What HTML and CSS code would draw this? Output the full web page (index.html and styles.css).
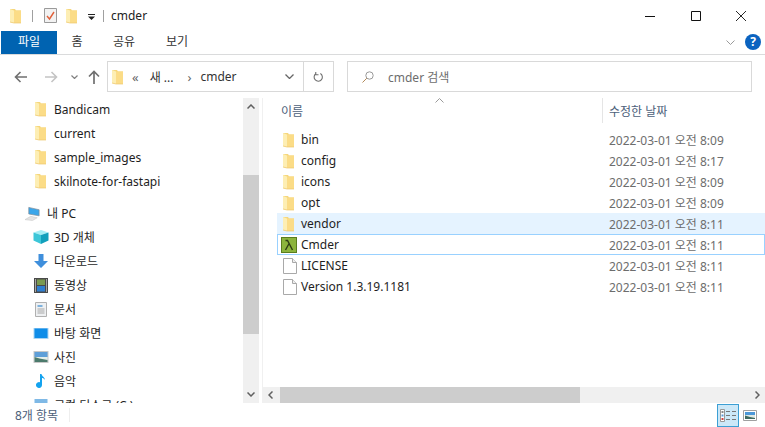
FILE: index.html
```html
<!DOCTYPE html>
<html lang="ko">
<head>
    <meta charset="UTF-8">
    <title>cmder</title>
    <link rel="stylesheet" href="styles.css">
</head>
<body>

<svg class="defs" width="0" height="0">
    <symbol id="folder" viewBox="0 0 11 16">
        <path d="M0 1h5l1 1.500h5V15H4l-4-1z" fill="#f5d67c"/>
        <path d="M0 1l4 1.500V15l-4-1z" fill="#fdeeb4"/>
        <path d="M4 2.500h7V15H4z" fill="#fbdc87"/>
        <path d="M0 14l4 1h7" fill="none" stroke="#eec76e" stroke-width=".7"/>
    </symbol>
    <symbol id="file" viewBox="0 0 14 16">
        <path d="M.5.5h9l4 4v11H.5z" fill="#fff" stroke="#a9a9a9"/>
        <path d="M9.500.5v4h4" fill="#eee" stroke="#a9a9a9"/>
    </symbol>
</svg>

<header class="titlebar">
    <svg class="folder-ico"><use href="#folder"/></svg>
    <span class="qa-sep"></span>
    <svg class="qa-check" viewBox="0 0 13 15" width="13" height="15">
        <path d="M.5.5h12v14H.5z" fill="#f2f2f2" stroke="#9a9a9a"/>
        <path d="M3 8l2.500 3L10 4" fill="none" stroke="#e0603a" stroke-width="1.400"/>
    </svg>
    <svg class="folder-ico qa-second"><use href="#folder"/></svg>
    <svg class="qa-drop" viewBox="0 0 7 6" width="7" height="6">
        <path d="M0 0h7v1H0zM0 2.500h7L3.500 6z" fill="#222"/>
    </svg>
    <span class="qa-sep qa-sep-2"></span>
    <span class="title">cmder</span>
    <div class="win-btns">
        <svg viewBox="0 0 10 10" width="10" height="10"><path d="M0 5.500h10" stroke="#111"/></svg>
        <svg viewBox="0 0 10 10" width="10" height="10"><path d="M.5.500h9v9h-9z" fill="none" stroke="#111"/></svg>
        <svg viewBox="0 0 10 10" width="10" height="10"><path d="M0 0l10 10M10 0L0 10" stroke="#111" stroke-width=".9"/></svg>
    </div>
</header>

<nav class="ribbon">
    <span class="tab tab-file">파일</span>
    <span class="tab tab-home">홈</span>
    <span class="tab tab-share">공유</span>
    <span class="tab">보기</span>
    <svg class="ribbon-chev" viewBox="0 0 9 5" width="9" height="5"><path d="M.5.500l4 4 4-4" fill="none" stroke="#9a9a9a"/></svg>
    <span class="help">?</span>
</nav>

<section class="navbar">
    <svg class="nav-ico" viewBox="0 0 14 12" width="14" height="12"><path d="M13 6H2M6.500 1L1.500 6l5 5" fill="none" stroke="#707070" stroke-width="1.600"/></svg>
    <svg class="nav-ico nav-fwd" viewBox="0 0 14 12" width="14" height="12"><path d="M1 6h11M7.500 1l5 5-5 5" fill="none" stroke="#c4c4c4" stroke-width="1.600"/></svg>
    <svg class="nav-ico nav-recent" viewBox="0 0 7 4" width="7" height="4"><path d="M.5.500L3.500 3.500 6.500.5" fill="none" stroke="#808080" stroke-width="1.200"/></svg>
    <svg class="nav-ico nav-up" viewBox="0 0 12 14" width="12" height="14"><path d="M6 14V2M1 6.500L6 1.500l5 5" fill="none" stroke="#707070" stroke-width="1.700"/></svg>
    <div class="address">
        <svg class="folder-ico"><use href="#folder"/></svg>
        <span class="crumb-mark">«</span>
        <span class="crumb">새 ...</span>
        <span class="crumb-mark crumb-arrow">›</span>
        <span class="crumb">cmder</span>
        <svg class="addr-chev" viewBox="0 0 9 5" width="9" height="5"><path d="M.5.500l4 4 4-4" fill="none" stroke="#666" stroke-width="1.300"/></svg>
        <span class="addr-refresh">
            <svg viewBox="0 0 12 12" width="11" height="12"><path d="M3 2.500a4.500 4.500 0 1 0 5-.3M3 .5v3h3" fill="none" stroke="#707070" stroke-width="1.200"/></svg>
        </span>
    </div>
    <div class="search">
        <svg viewBox="0 0 12 12" width="12" height="12"><circle cx="7.500" cy="4.500" r="3.700" fill="none" stroke="#999"/><path d="M4.800 7.200L.5 11.500" stroke="#b38a5a"/></svg>
        <span>cmder 검색</span>
    </div>
</section>

<main class="panes">
    <aside class="sidebar">
        <ul class="tree">
            <li><svg class="folder-ico"><use href="#folder"/></svg>Bandicam</li>
            <li><svg class="folder-ico"><use href="#folder"/></svg>current</li>
            <li><svg class="folder-ico"><use href="#folder"/></svg>sample_images</li>
            <li><svg class="folder-ico"><use href="#folder"/></svg>skilnote-for-fastapi</li>
            <li class="tree-root">
                <svg class="tree-ico pc-ico" viewBox="0 0 17 15" width="17" height="15"><path d="M4 1l11 2.500v6.500L4 8z" fill="#3aa6ea" stroke="#7f8a94" stroke-width=".7"/><path d="M0 14l6-3.500 7 1.500-5 3z" fill="#e4e4e4" stroke="#c0c0c0" stroke-width=".5"/></svg>내 PC
            </li>
            <li>
                <svg class="tree-ico" viewBox="0 0 15 14" width="15" height="14"><path d="M0 2.500L7.500 0 15 2.500 7.500 5z" fill="#a6eef5"/><path d="M0 2.500L7.500 5v9L0 10.500z" fill="#3cc6d8"/><path d="M7.500 5L15 2.500v8L7.500 14z" fill="#12a0bc"/></svg>3D 개체
            </li>
            <li>
                <svg class="tree-ico" viewBox="0 0 14 14" width="14" height="14"><path d="M4.500 0h5v7H14l-7 7-7-7h4.500z" fill="#3f8fdc"/></svg>다운로드
            </li>
            <li>
                <svg class="tree-ico" viewBox="0 0 14 15" width="14" height="15"><path d="M0 0h14v15H0z" fill="#4a4a4a"/><path d="M3 1.500h8v5.500H3z" fill="#7a9a50"/><path d="M3 8h8v5.500H3z" fill="#2f7fd0"/><path d="M1 1h1v13H1zM12 1h1v13h-1z" fill="#cfcfcf" opacity=".7"/></svg>동영상
            </li>
            <li>
                <svg class="tree-ico" viewBox="0 0 12 15" width="12" height="15"><path d="M.5.500h11v14H.5z" fill="#eef0f2" stroke="#b0b0b0"/><path d="M2.500 3h5v2h-5z" fill="#7fb2dd"/><path d="M2.500 7h7M2.500 9h7M2.500 11h7" stroke="#a8a8a8"/></svg>문서
            </li>
            <li>
                <svg class="tree-ico" viewBox="0 0 15 11" width="15" height="11"><path d="M0 0h15v11H0z" fill="#a9d4f2"/><path d="M1 .5h13v9.500H1z" fill="#0f8de8"/></svg>바탕 화면
            </li>
            <li>
                <svg class="tree-ico" viewBox="0 0 15 12" width="15" height="12"><path d="M0 0h15v12H0z" fill="#c8c8c8"/><path d="M1 1h13v5H1z" fill="#5f9fd8"/><path d="M1 6h13v5H1z" fill="#e6efe9"/><path d="M1 6l5 1.500 8 1.500v2H1z" fill="#4c7a6c"/></svg>사진
            </li>
            <li>
                <svg class="tree-ico" viewBox="0 0 10 14" width="10" height="14"><path d="M4 0h1.500c.3 2.500 3.500 3 3.500 6-1-1.500-2-2-3-2v7a3 3 0 1 1-2-2.800z" fill="#14a3ef"/></svg>음악
            </li>
            <li>
                <svg class="tree-ico" viewBox="0 0 15 12" width="15" height="12"><path d="M1 0h13v12H1z" fill="#7fb9e6"/></svg>로컬 디스크 (C:)
            </li>
        </ul>
        <div class="vscroll">
            <svg class="scroll-arrow" viewBox="0 0 8 5" width="8" height="5"><path d="M.5 4.500l3.500-3.500 3.500 3.500" fill="none" stroke="#606060" stroke-width="1.500"/></svg>
            <div class="vtrack"><div class="vthumb"></div></div>
            <svg class="scroll-arrow" viewBox="0 0 8 5" width="8" height="5"><path d="M.5.500L4 4 7.500.5" fill="none" stroke="#606060" stroke-width="1.500"/></svg>
        </div>
    </aside>

    <section class="content">
        <div class="columns">
            <span class="col col-name">이름
                <svg class="sort-mark" viewBox="0 0 9 5" width="9" height="5"><path d="M.5 4.500l4-4 4 4" fill="none" stroke="#9a9a9a"/></svg>
            </span>
            <span class="col col-date">수정한 날짜</span>
        </div>
        <ul class="files">
            <li class="file"><svg class="folder-ico"><use href="#folder"/></svg><span class="fname">bin</span><span class="fdate">2022-03-01 오전 8:09</span></li>
            <li class="file"><svg class="folder-ico"><use href="#folder"/></svg><span class="fname">config</span><span class="fdate">2022-03-01 오전 8:17</span></li>
            <li class="file"><svg class="folder-ico"><use href="#folder"/></svg><span class="fname">icons</span><span class="fdate">2022-03-01 오전 8:09</span></li>
            <li class="file"><svg class="folder-ico"><use href="#folder"/></svg><span class="fname">opt</span><span class="fdate">2022-03-01 오전 8:09</span></li>
            <li class="file file-hover"><svg class="folder-ico"><use href="#folder"/></svg><span class="fname">vendor</span><span class="fdate">2022-03-01 오전 8:11</span></li>
            <li class="file file-focus">
                <svg class="file-ico lambda-ico" viewBox="0 0 16 16" width="16" height="16"><path d="M0 0h16v16H0z" fill="#5a7d1e"/><path d="M1 1h14v14H1z" fill="#8cb43c"/><path d="M4.500 3.500h2l5 9.500M7.800 7L4.500 13" fill="none" stroke="#2f3d14" stroke-width="1.400"/></svg>
                <span class="fname">Cmder</span><span class="fdate">2022-03-01 오전 8:11</span>
            </li>
            <li class="file"><svg class="file-ico"><use href="#file"/></svg><span class="fname">LICENSE</span><span class="fdate">2022-03-01 오전 8:11</span></li>
            <li class="file"><svg class="file-ico"><use href="#file"/></svg><span class="fname">Version 1.3.19.1181</span><span class="fdate">2022-03-01 오전 8:11</span></li>
        </ul>
        <div class="hscroll">
            <svg viewBox="0 0 5 8" width="5" height="8"><path d="M4.500.5L1 4l3.500 3.500" fill="none" stroke="#606060" stroke-width="1.500"/></svg>
            <div class="hthumb"></div>
            <svg class="hs-right" viewBox="0 0 5 8" width="5" height="8"><path d="M.5.500L4 4 .5 7.500" fill="none" stroke="#606060" stroke-width="1.500"/></svg>
        </div>
    </section>
</main>

<footer class="statusbar">
    <span class="count">8개 항목</span>
    <span class="status-sep"></span>
    <div class="views">
        <span class="view view-on">
            <svg viewBox="0 0 17 13" width="17" height="13">
                <path d="M.5.500h4v12h-4z" fill="#fff" stroke="#999"/>
                <path d="M1.500 2h2v2h-2z" fill="#888"/><path d="M1.500 5.500h2v2h-2z" fill="#5a9ad8"/><path d="M1.500 9h2v2h-2z" fill="#d04040"/>
                <path d="M6 2.500h4M12 2.500h4M6 6.500h4M12 6.500h4M6 10.500h4M12 10.500h4" stroke="#777"/>
            </svg>
        </span>
        <span class="view">
            <svg viewBox="0 0 14 11" width="14" height="11"><path d="M.5.500h13v10H.5z" fill="#fff" stroke="#a0a0a0"/><path d="M2 2h10v3H2z" fill="#4c98d8"/><path d="M2 5h10v4H2z" fill="#dfe9e4"/><path d="M2 5.500l5 1.500 5 1v1H2z" fill="#3f6a60"/></svg>
        </span>
    </div>
</footer>

</body>
</html>
```

FILE: styles.css
```css
* {
    box-sizing: border-box;
}
html, body {
    height: 100%;
}
body {
    margin: 0;
    height: 427px;
    overflow: hidden;
    display: flex;
    flex-direction: column;
    background: #fff;
    color: #1e1e1e;
    font-family: "Noto Sans", "Noto Sans CJK KR", sans-serif;
    font-size: 12px;
}
ul {
    list-style: none;
    margin: 0;
    padding: 0;
}
.defs {
    position: absolute;
}
.folder-ico {
    width: 11px;
    height: 16px;
    flex: none;
}
.file-ico {
    width: 14px;
    height: 16px;
    flex: none;
}

/* title bar */
.titlebar {
    height: 31px;
    display: flex;
    align-items: center;
    padding-left: 10px;
    flex: none;
}
.qa-sep {
    width: 1px;
    height: 12px;
    background: #a0a0a0;
    margin: 0 11px 0 11px;
}
.qa-second {
    margin-left: 9px;
}
.qa-drop {
    margin-left: 11px;
    margin-top: 3px;
}
.qa-sep-2 {
    margin: 0 7px 0 8px;
}
.title {
    color: #222;
}
.win-btns {
    margin-left: auto;
    width: 120px;
    display: flex;
    justify-content: space-between;
    padding-right: 19px;
    align-items: center;
}

/* ribbon tabs */
.ribbon {
    height: 24px;
    display: flex;
    align-items: stretch;
    padding-left: 1px;
    border-bottom: 1px solid #dadbdc;
    flex: none;
}
.tab {
    width: 52px;
    text-align: center;
    line-height: 21px;
    color: #333;
}
.tab-file {
    width: 56px;
    height: 23px;
    background: #0063b1;
    color: #fff;
}
.tab-home {
    width: 40px;
}
.tab-share {
    width: 54px;
}
.ribbon-chev {
    margin: 9px 0 0 auto;
}
.help {
    width: 16px;
    height: 16px;
    margin: 3px 4px 0 10px;
    border-radius: 50%;
    background: #0b63c0;
    color: #fff;
    font-weight: bold;
    line-height: 16px;
    text-align: center;
}

/* nav and search */
.navbar {
    height: 43px;
    display: flex;
    align-items: center;
    padding: 0 13px 0 14px;
    flex: none;
}
.nav-fwd {
    margin-left: 16px;
}
.nav-recent {
    margin-left: 13px;
}
.nav-up {
    margin-left: 10px;
}
.address {
    width: 227px;
    height: 31px;
    margin-left: 7px;
    border: 1px solid #d9d9d9;
    display: flex;
    align-items: center;
    padding-left: 4px;
    color: #333;
}
.crumb-mark {
    margin: 0 11px 0 9px;
    color: #666;
    font-size: 13px;
}
.crumb-arrow {
    margin: 0 9px 0 14px;
}
.addr-chev {
    margin-left: auto;
}
.addr-refresh {
    width: 30px;
    height: 29px;
    margin-left: 9px;
    border-left: 1px solid #d9d9d9;
    display: flex;
    align-items: center;
    justify-content: center;
}
.search {
    flex: 1;
    height: 31px;
    margin-left: 13px;
    border: 1px solid #d9d9d9;
    display: flex;
    align-items: center;
    padding-left: 14px;
    gap: 14px;
    color: #6d6d6d;
}

/* sidebar */
.panes {
    flex: 1;
    min-height: 0;
    display: flex;
}
.sidebar {
    width: 263px;
    flex: none;
    display: flex;
    padding-right: 3px;
    border-right: 1px solid #f0f0f0;
    overflow: hidden;
}
.tree {
    width: 243px;
    margin-top: -1px;
    overflow: hidden;
    flex: none;
}
.tree li {
    height: 24px;
    display: flex;
    align-items: center;
    padding-left: 35px;
    gap: 8px;
    white-space: nowrap;
}
.tree li.tree-root {
    margin-top: 8px;
    padding-left: 25px;
    gap: 6px;
}
.tree .tree-ico {
    width: 16px;
    margin-left: -2px;
    margin-right: -3px;
    flex: none;
}
.tree li.tree-root .tree-ico {
    margin: 0;
}
.vscroll {
    width: 16px;
    background: #f0f0f0;
    display: flex;
    flex-direction: column;
    align-items: center;
}
.scroll-arrow {
    flex: none;
    margin: 6px 0;
}
.vtrack {
    flex: 1;
    width: 100%;
    padding-top: 60px;
    padding-bottom: 52px;
}
.vthumb {
    height: 100%;
    background: #cdcdcd;
}

/* file list */
.content {
    flex: 1;
    min-width: 0;
    display: flex;
    flex-direction: column;
}
.columns {
    height: 25px;
    display: flex;
    flex: none;
    color: #4c607a;
    margin-bottom: 6px;
}
.col {
    display: flex;
    align-items: center;
    position: relative;
}
.col-name {
    width: 340px;
    padding-left: 18px;
    border-right: 1px solid #e5e5e5;
}
.col-date {
    padding-left: 6px;
}
.sort-mark {
    position: absolute;
    left: 172px;
    top: 0;
}
.files {
    flex: 1;
    padding-left: 14px;
}
.file {
    height: 21px;
    display: flex;
    align-items: center;
    padding-left: 6px;
    white-space: nowrap;
}
.fname {
    width: 308px;
    margin-left: 7px;
}
.fdate {
    color: #6d6d6d;
}
.file .file-ico {
    margin-right: -3px;
}
.file-hover {
    background: #e5f3ff;
}
.file-focus {
    border: 1px solid #99d1ff;
    padding-left: 5px;
}
.file .lambda-ico {
    width: 16px;
    margin-left: -2px;
}
.hscroll {
    height: 16px;
    background: #f0f0f0;
    display: flex;
    align-items: center;
    padding: 0 5px;
    flex: none;
}
.hthumb {
    width: 300px;
    height: 100%;
    margin-left: 7px;
    background: #cdcdcd;
}
.hs-right {
    margin-left: auto;
}

/* status bar */
.statusbar {
    height: 24px;
    flex: none;
    display: flex;
    align-items: center;
    padding-left: 15px;
    color: #4c607a;
}
.status-sep {
    width: 1px;
    height: 14px;
    margin-left: 11px;
    background: #eee;
}
.views {
    margin-left: auto;
    display: flex;
    align-items: center;
    margin-right: 8px;
    gap: 4px;
}
.view {
    display: flex;
    align-items: center;
    justify-content: center;
}
.view-on {
    width: 22px;
    height: 23px;
    background: #cce8f8;
    border: 1px solid #3c9fd4;
}
```
